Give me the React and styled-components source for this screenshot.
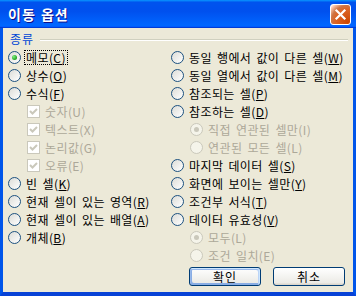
import React from 'react';
import styled, { createGlobalStyle, css } from 'styled-components';

const Global = createGlobalStyle`
  html, body { margin: 0; padding: 0; background: #ECE9D8; }
  body { font-family: "Noto Sans CJK KR", "Noto Sans", sans-serif; font-size: 12px; }
`;

const Window = styled.div`
  width: 356px;
  height: 296px;
  display: flex;
  flex-direction: column;
  box-sizing: border-box;
  background: #0055EA;
`;

const TitleBar = styled.div`
  height: 28px;
  flex: none;
  display: flex;
  align-items: center;
  justify-content: space-between;
  padding: 0 5px 0 8px;
  background: linear-gradient(180deg, #0997ff, #0053ee 8%, #0050ee 40%, #06f 88%, #06f 93%, #005bff 95%, #003dd7 96%, #003dd7);
`;

const Title = styled.span`
  color: #fff;
  font-weight: bold;
  font-size: 14px;
  line-height: 15px;
  text-shadow: 1px 1px #0f1089;
  letter-spacing: 1px;
  word-spacing: 1px;
`;

const CloseButton = styled.div`
  width: 21px;
  height: 21px;
  box-sizing: border-box;
  border: 1px solid #fff;
  border-radius: 3px;
  background: radial-gradient(circle at 90% 90%, #cc4600 0, #dc6527 55%, #cd7546 70%, #ffccb2 90%, #fff 100%);
  display: flex;
  align-items: center;
  justify-content: center;
`;

const Client = styled.div`
  flex: 1;
  display: flex;
  flex-direction: column;
  background: #ECE9D8;
  border-left: 3px solid #0055EA;
  border-right: 3px solid #0055EA;
  border-bottom: 4px solid #0842D6;
  letter-spacing: 0.4px;
  word-spacing: 2px;
`;

const GroupHeader = styled.div`
  height: 20px;
  display: flex;
  align-items: center;
  gap: 6px;
  padding: 0 5px 0 7px;
`;

const GroupLabel = styled.span`
  color: #0046D5;
  line-height: 13px;
  letter-spacing: 1px;
`;

const GroupLine = styled.div`
  flex: 1;
  height: 0;
  margin-top: 3px;
  border-top: 1px solid #D0D0BF;
  border-bottom: 1px solid #fff;
`;

const Options = styled.div`
  display: grid;
  grid-template-columns: 163px 1fr;
  padding-left: 5px;
`;

const Column = styled.div`
  display: flex;
  flex-direction: column;
`;

const Row = styled.div`
  height: 18px;
  display: flex;
  align-items: center;
  gap: 3px;
  padding-left: ${p => (p.$indent ? 19 : 0)}px;
  color: ${p => (p.$disabled ? '#ACA899' : '#000')};
  white-space: nowrap;
`;

const Label = styled.span`
  border: 1px ${p => (p.$focused ? 'dotted #000' : 'solid transparent')};
  padding: 0 1px;
  line-height: 13px;
`;

const RadioCircle = styled.span`
  position: relative;
  width: 13px;
  height: 13px;
  flex: none;
  box-sizing: border-box;
  border-radius: 50%;
  border: 1px solid ${p => (p.$disabled ? '#CAC8BB' : '#1C5180')};
  background: ${p => (p.$disabled ? '#F5F4EA' : 'linear-gradient(135deg, #DCDCD7, #FFFFFF)')};
  ${p => p.$checked && css`
    &::after {
      content: '';
      position: absolute;
      left: 3px;
      top: 3px;
      width: 5px;
      height: 5px;
      border-radius: 50%;
      background: ${p.$disabled ? '#CAC8BB' : 'radial-gradient(circle at 35% 35%, #7EF07E, #21A121 70%)'};
    }
  `}
`;

const CheckBox = styled.span`
  width: 13px;
  height: 13px;
  flex: none;
  box-sizing: border-box;
  border: 1px solid #CAC8BB;
  background: #fff;
  display: flex;
  align-items: center;
  justify-content: center;
`;

const Footer = styled.div`
  display: flex;
  justify-content: flex-end;
  gap: 12px;
  margin-top: 3px;
  padding-right: 8px;
`;

const Button = styled.button`
  width: 72px;
  height: 19px;
  box-sizing: border-box;
  border: 1px solid #003C74;
  border-radius: 3px;
  background: linear-gradient(180deg, #fff, #ecebe6 86%, #d6d0c5);
  font: 12px "Noto Sans CJK KR", "Noto Sans", sans-serif;
  letter-spacing: 1px;
  line-height: 13px;
  padding: 0;
  color: #000;
  ${p => p.$default && css`
    box-shadow: inset -1px 1px #cee7ff, inset 1px 2px #98b8ea, inset -2px 2px #bcd4f6, inset 1px -1px #89ade4, inset 2px -2px #89ade4;
  `}
`;

const Radio = ({ text, acc, checked, disabled, indent, focused }) => (
  <Row $disabled={disabled} $indent={indent}>
    <RadioCircle $checked={checked} $disabled={disabled} />
    <Label $focused={focused}>
      {text}({acc && !disabled ? <u>{acc}</u> : acc})
    </Label>
  </Row>
);

const Check = ({ text, acc }) => (
  <Row $disabled $indent>
    <CheckBox>
      <svg width="9" height="9" viewBox="0 0 9 9">
        <polyline points="1,4 3.5,6.5 8,2" fill="none" stroke="#CAC8BB" strokeWidth="2" />
      </svg>
    </CheckBox>
    <Label>{text}({acc})</Label>
  </Row>
);

export default function App() {
  return (
    <>
      <Global />
      <Window>
        <TitleBar>
          <Title>이동 옵션</Title>
          <CloseButton>
            <svg width="13" height="13" viewBox="0 0 13 13">
              <path d="M2.5 2.5 L10.5 10.5 M10.5 2.5 L2.5 10.5" stroke="#fff" strokeWidth="2.2" strokeLinecap="square" />
            </svg>
          </CloseButton>
        </TitleBar>
        <Client>
          <GroupHeader>
            <GroupLabel>종류</GroupLabel>
            <GroupLine />
          </GroupHeader>
          <Options>
            <Column>
              <Radio text="메모" acc="C" checked focused />
              <Radio text="상수" acc="O" />
              <Radio text="수식" acc="F" />
              <Check text="숫자" acc="U" />
              <Check text="텍스트" acc="X" />
              <Check text="논리값" acc="G" />
              <Check text="오류" acc="E" />
              <Radio text="빈 셀" acc="K" />
              <Radio text="현재 셀이 있는 영역" acc="R" />
              <Radio text="현재 셀이 있는 배열" acc="A" />
              <Radio text="개체" acc="B" />
            </Column>
            <Column>
              <Radio text="동일 행에서 값이 다른 셀" acc="W" />
              <Radio text="동일 열에서 값이 다른 셀" acc="M" />
              <Radio text="참조되는 셀" acc="P" />
              <Radio text="참조하는 셀" acc="D" />
              <Radio text="직접 연관된 셀만" acc="I" checked disabled indent />
              <Radio text="연관된 모든 셀" acc="L" disabled indent />
              <Radio text="마지막 데이터 셀" acc="S" />
              <Radio text="화면에 보이는 셀만" acc="Y" />
              <Radio text="조건부 서식" acc="T" />
              <Radio text="데이터 유효성" acc="V" />
              <Radio text="모두" acc="L" checked disabled indent />
              <Radio text="조건 일치" acc="E" disabled indent />
            </Column>
          </Options>
          <Footer>
            <Button $default>확인</Button>
            <Button>취소</Button>
          </Footer>
        </Client>
      </Window>
    </>
  );
}
